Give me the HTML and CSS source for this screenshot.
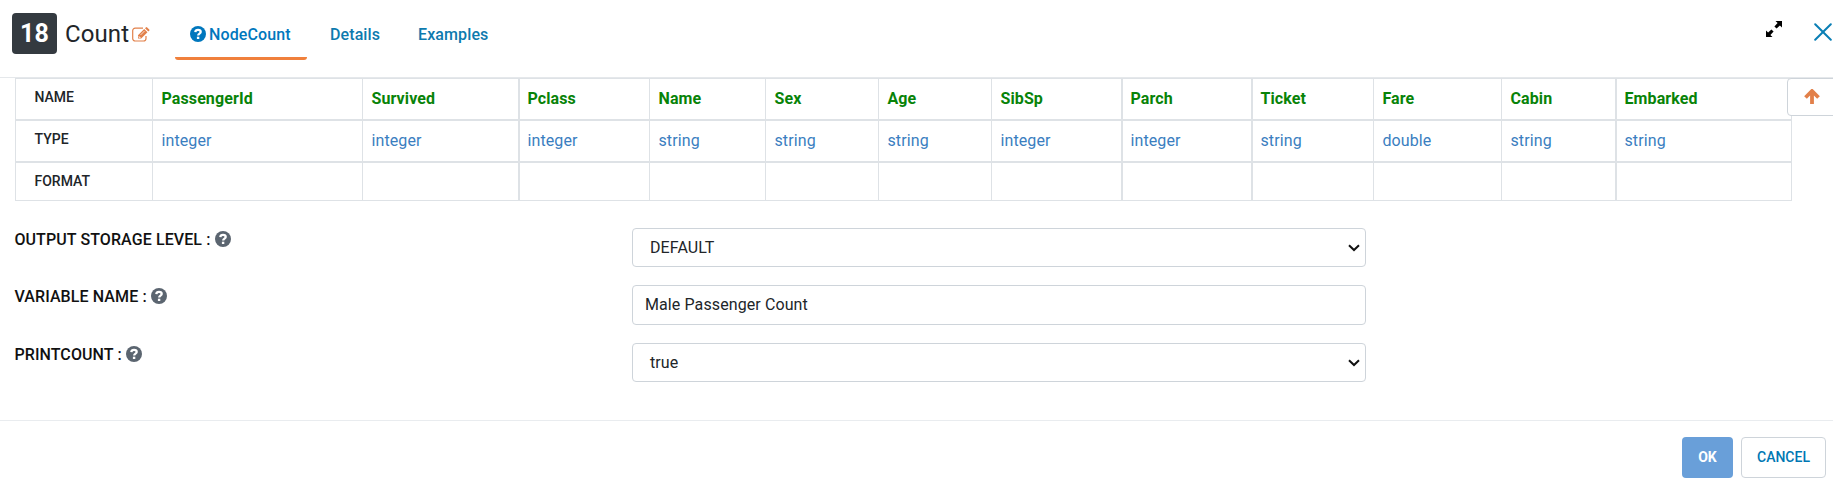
FILE: index.html
```
<!DOCTYPE html>
<html lang="en">
<head>
<meta charset="utf-8">
<title>Count</title>
<link rel="stylesheet" href="styles.css">
</head>
<body>
<svg class="defs" width="0" height="0">
  <symbol id="help" viewBox="0 0 16 16">
    <circle cx="8" cy="8" r="8" fill="currentColor"/>
    <path d="M5.300 6.200C5.500 4.500 6.700 3.900 8 3.900c1.500 0 2.700.8 2.700 2.100 0 1.700-2.500 1.500-2.500 3.500" fill="none" stroke="#fff" stroke-width="2.300"/>
    <rect x="6.900" y="10.700" width="2.400" height="2.300" fill="#fff"/>
  </symbol>
</svg>
<header class="header">
  <span class="badge">18</span>
  <h1 class="title">Count</h1>
  <svg class="edit" viewBox="0 0 18 15">
    <path d="M11 1.100H3.200A2.500 2.500 0 0 0 .7 3.600v7.900A2.500 2.500 0 0 0 3.200 14h8.300a2.500 2.500 0 0 0 2.500-2.500V9" fill="none" stroke="currentColor" stroke-width="1.200"/>
    <path d="M6 11.500V8.300L12.200 2l3.300 3.200-6.300 6.300zM13 1.200l.8-.8a1 1 0 0 1 1.400 0l2 2a1 1 0 0 1 0 1.400l-.9.8z" fill="currentColor"/>
    <path d="M7 9v1.500h1.600M8.500 8l4-4" fill="none" stroke="#fff" stroke-width=".7"/>
  </svg>
  <nav class="tabs">
    <a class="tab active"><svg class="help"><use href="#help"/></svg>NodeCount</a>
    <a class="tab">Details</a>
    <a class="tab">Examples</a>
  </nav>
  <svg class="expand" viewBox="0 0 16 16">
    <path d="M9.500 0H16v6.500l-2.100-2.100-3.300 3.200-2.200-2.200 3.200-3.300zM6.500 16H0V9.500l2.100 2.100 3.300-3.200 2.200 2.200-3.200 3.300z" fill="#000"/>
  </svg>
  <svg class="close" viewBox="0 0 18 18"><path d="M1.200 1.200l15.600 15.600M16.800 1.200L1.200 16.800" fill="none" stroke="currentColor" stroke-width="2" stroke-linecap="round"/></svg>
</header>
<main class="content">
  <div class="schema">
    <div class="cell head">NAME</div><div class="cell name">PassengerId</div><div class="cell name">Survived</div><div class="cell name thick">Pclass</div><div class="cell name">Name</div><div class="cell name">Sex</div><div class="cell name">Age</div><div class="cell name">SibSp</div><div class="cell name thick">Parch</div><div class="cell name thick">Ticket</div><div class="cell name">Fare</div><div class="cell name">Cabin</div><div class="cell name thick">Embarked</div>
    <div class="cell head">TYPE</div><div class="cell type">integer</div><div class="cell type">integer</div><div class="cell type thick">integer</div><div class="cell type">string</div><div class="cell type">string</div><div class="cell type">string</div><div class="cell type">integer</div><div class="cell type thick">integer</div><div class="cell type thick">string</div><div class="cell type">double</div><div class="cell type">string</div><div class="cell type thick">string</div>
    <div class="cell head last">FORMAT</div><div class="cell last"></div><div class="cell last"></div><div class="cell last thick"></div><div class="cell last"></div><div class="cell last"></div><div class="cell last"></div><div class="cell last"></div><div class="cell last thick"></div><div class="cell last thick"></div><div class="cell last"></div><div class="cell last"></div><div class="cell last thick"></div>
  </div>
  <button class="collapse" aria-label="Collapse">
    <svg class="arrow" viewBox="0 0 16 15"><path d="M8 15V3M1.500 8.500L8 2l6.500 6.500" fill="none" stroke="currentColor" stroke-width="3.800"/></svg>
  </button>
  <div class="form">
    <div class="row">
      <label class="label">OUTPUT STORAGE LEVEL :<svg class="help"><use href="#help"/></svg></label>
      <div class="field select">DEFAULT<svg class="chevron" viewBox="0 0 12 8"><path d="M1 1.200l5 4.800 5-4.800" fill="none" stroke="#111" stroke-width="2"/></svg></div>
    </div>
    <div class="row">
      <label class="label">VARIABLE NAME :<svg class="help"><use href="#help"/></svg></label>
      <div class="field input">Male Passenger Count</div>
    </div>
    <div class="row">
      <label class="label">PRINTCOUNT :<svg class="help"><use href="#help"/></svg></label>
      <div class="field select">true<svg class="chevron" viewBox="0 0 12 8"><path d="M1 1.200l5 4.800 5-4.800" fill="none" stroke="#111" stroke-width="2"/></svg></div>
    </div>
  </div>
</main>
<footer class="footer">
  <button class="btn ok">OK</button>
  <button class="btn cancel">CANCEL</button>
</footer>
</body>
</html>
```
FILE: styles.css
```
* { box-sizing: border-box; }
body {
  margin: 0;
  height: 485px;
  overflow: hidden;
  display: flex;
  flex-direction: column;
  background: #fff;
  color: #212529;
  font: 16px/24px Roboto, sans-serif;
  letter-spacing: .1px;
}
.defs { position: absolute; }
.header {
  height: 78px;
  flex: none;
  display: flex;
  align-items: flex-start;
  padding: 13px 1px 0 12px;
  border-bottom: 1px solid #e5e8eb;
}
.badge {
  width: 45px;
  height: 41px;
  border-radius: 4px;
  background: #343a40;
  color: #fff;
  font-size: 25px;
  font-weight: 700;
  line-height: 41px;
  text-align: center;
}
.title {
  width: 67px;
  margin: 0 0 0 8px;
  font-size: 24px;
  font-weight: 400;
  line-height: 42px;
}
.edit { width: 18px; height: 15px; margin-top: 14px; color: #e2804a; }
.tabs { display: flex; margin-left: 25px; }
.tab {
  height: 47px;
  padding: 10px 15px 0;
  margin-right: 8px;
  color: #0d7aae;
  font-weight: 500;
}
.tab.active {
  display: flex;
  width: 132px;
  color: #0077bd;
  border-bottom: 3px solid #f0803c;
  border-radius: 3px;
}
.help { width: 16px; height: 16px; flex: none; }
.tab .help { margin: 3px 3px 0 0; }
.expand { width: 16px; height: 16px; margin: 8px 32px 0 auto; }
.close { width: 18px; height: 18px; margin-top: 10px; color: #0a7fb5; }
.content { position: relative; flex: none; height: 342px; padding-left: 15px; }
.schema {
  display: grid;
  width: 1777px;
  grid-template-columns: 137px 210px 156px 131px 116px 113px 113px 130px 130px 122px 128px 114px 176px;
  grid-template-rows: 42px 42px 38px;
  border-top: 1px solid #dee2e6;
  border-right: 1px solid #dee2e6;
}
.cell {
  border-left: 1px solid #dee2e6;
  border-bottom: 2px solid #dee2e6;
  padding: 8px 0 0 8.5px;
}
.thick { border-left-width: 2px; padding-left: 7.5px; }
.last { border-bottom-width: 1px; }
.head { padding: 6px 0 0 18.5px; font-size: 14px; font-weight: 500; letter-spacing: 0; }
.name { color: #088308; font-weight: 700; }
.type { color: #3a7ebf; }
.collapse {
  position: absolute;
  top: 0;
  right: -5px;
  width: 51px;
  height: 38px;
  padding: 10px 0 0 16px;
  display: flex;
  border: 1px solid #ced4da;
  border-radius: 4px;
  background: #fff;
  color: #e2804a;
}
.arrow { width: 16px; height: 15px; }
.form { display: grid; gap: 18px; padding-top: 27px; }
.row { display: grid; grid-template-columns: 617px 734px; align-items: start; }
.label { display: flex; margin-left: -.6px; font-weight: 500; color: #111; }
.label .help { margin: 3px 0 0 4px; color: #5b6570; }
.field {
  display: flex;
  align-items: center;
  height: 39px;
  border: 1px solid #ced4da;
  border-radius: 4px;
}
.select { justify-content: space-between; padding: 0 5px 0 17px; }
.input { height: 40px; padding-left: 12px; }
.chevron { width: 12px; height: 8px; }
.footer {
  flex: none;
  height: 65px;
  display: flex;
  justify-content: flex-end;
  gap: 8px;
  padding: 16px 7px 0 0;
  border-top: 1px solid #e9ecef;
}
.btn {
  height: 41px;
  padding: 0 0 1px;
  border-radius: 4px;
  font: 500 14px/20px Roboto, sans-serif;
}
.ok { width: 51px; border: 0; background: #699fd9; color: #fff; font-weight: 700; }
.cancel { width: 85px; border: 1px solid #ced4da; background: #fff; color: #0077b3; }
```
